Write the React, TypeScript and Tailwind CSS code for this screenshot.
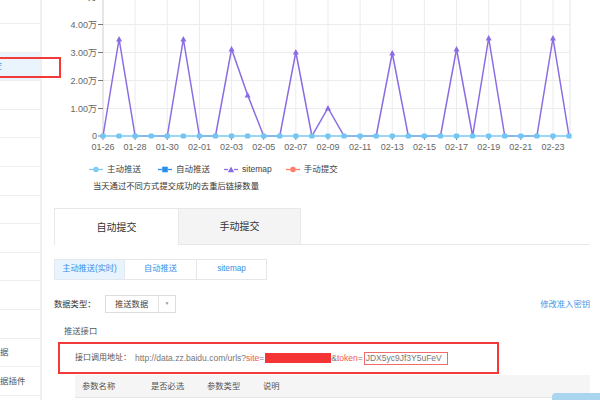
import React from "react";

const X0 = 103;
const DX = 16.07;
const Y0 = 136;

// sitemap 曲线：下标 -> y 坐标（其余为 0）
const SITEMAP_PEAKS: Record<number, number> = {
  1: 39,
  5: 39,
  8: 49,
  9: 95,
  12: 52,
  14: 108,
  18: 53,
  22: 49,
  24: 38,
  28: 38,
};

const DAYS = Array.from({ length: 30 }, (_, i) => i);

function dateLabel(i: number): string {
  const d = new Date(2018, 0, 26 + i);
  const m = String(d.getMonth() + 1).padStart(2, "0");
  const day = String(d.getDate()).padStart(2, "0");
  return `${m}-${day}`;
}

const Y_TICKS = [
  { y: -3, label: "5.00万" },
  { y: 24.5, label: "4.00万" },
  { y: 52.5, label: "3.00万" },
  { y: 80.5, label: "2.00万" },
  { y: 108.5, label: "1.00万" },
  { y: Y0, label: "0" },
];

function PushChart() {
  const xs = DAYS.map((i) => X0 + i * DX);
  const purplePts = DAYS.map((i) => `${xs[i]},${SITEMAP_PEAKS[i] ?? Y0}`).join(" ");
  const font = "'Liberation Sans','Noto Sans CJK SC',sans-serif";

  return (
    <svg width={558} height={152} viewBox="42 0 558 152" className="block shrink-0">
      {/* 网格 */}
      {Y_TICKS.slice(0, -1).map((t) => (
        <line key={t.y} x1={X0} x2={570} y1={t.y} y2={t.y} stroke="#ececec" />
      ))}
      {DAYS.filter((i) => i % 2 === 0).map((i) => (
        <line key={i} x1={xs[i]} x2={xs[i]} y1={0} y2={Y0} stroke="#ececec" />
      ))}
      <line x1={570} x2={570} y1={0} y2={Y0} stroke="#e4e4e4" />
      <line x1={X0} x2={X0} y1={0} y2={Y0} stroke="#d8d8d8" />

      {/* y 轴 */}
      {Y_TICKS.map((t) => (
        <g key={t.label}>
          <line x1={98} x2={X0} y1={t.y} y2={t.y} stroke="#777" />
          <text x={97} y={t.y + 3.2} textAnchor="end" fontSize={9} fill="#666" fontFamily={font}>
            {t.label}
          </text>
        </g>
      ))}

      {/* x 轴 */}
      {DAYS.filter((i) => i % 2 === 0).map((i) => (
        <g key={i}>
          <line x1={xs[i]} x2={xs[i]} y1={Y0} y2={Y0 + 4} stroke="#888" />
          <text x={xs[i]} y={149.5} textAnchor="middle" fontSize={9} fill="#666" fontFamily={font}>
            {dateLabel(i)}
          </text>
        </g>
      ))}

      {/* sitemap */}
      <polyline points={purplePts} fill="none" stroke="#8a6de2" strokeWidth={1.5} />
      {DAYS.filter((i) => SITEMAP_PEAKS[i] != null).map((i) => {
        const y = SITEMAP_PEAKS[i];
        return (
          <polygon
            key={i}
            points={`${xs[i]},${y - 3} ${xs[i] - 3},${y + 2.5} ${xs[i] + 3},${y + 2.5}`}
            fill="#8a6de2"
          />
        );
      })}

      {/* 主动推送 / 自动推送 */}
      <line x1={X0} x2={570} y1={Y0} y2={Y0} stroke="#78c8f2" strokeWidth={1.6} />
      {xs.map((x, i) => (
        <rect key={i} x={x - 2.6} y={Y0 - 2.6} width={5.2} height={5.2} rx={1.3} fill="#74c6f2" />
      ))}
    </svg>
  );
}

function LegendIcon({ color, shape }: { color: string; shape: "circle" | "square" | "triangle" }) {
  return (
    <svg width={14} height={7} viewBox="0 0 14 7" className="shrink-0">
      <line x1={0} x2={4} y1={3.5} y2={3.5} stroke={color} strokeWidth={1.3} />
      <line x1={10} x2={14} y1={3.5} y2={3.5} stroke={color} strokeWidth={1.3} />
      {shape === "circle" && <circle cx={7} cy={3.5} r={2.8} fill={color} />}
      {shape === "square" && <rect x={4.2} y={0.7} width={5.6} height={5.6} fill={color} />}
      {shape === "triangle" && <polygon points="7,0.5 3.8,6.3 10.2,6.3" fill={color} />}
    </svg>
  );
}

const LEGEND = [
  { label: "主动推送", color: "#7ecdf4", shape: "circle" as const, gap: "ml-0" },
  { label: "自动推送", color: "#2a8ff0", shape: "square" as const, gap: "ml-[17px]" },
  { label: "sitemap", color: "#8a6de2", shape: "triangle" as const, gap: "ml-[14px]" },
  { label: "手动提交", color: "#ff7b6b", shape: "circle" as const, gap: "ml-[14px]" },
];

const SIDEBAR_ROWS = 13;

function Sidebar() {
  return (
    <div className="w-[42px] shrink-0 border-r-2 border-[#f0f0f0] bg-white overflow-hidden flex flex-col">
      <div className="h-[24px] shrink-0 border-b border-[#eeeeee]" />
      {Array.from({ length: SIDEBAR_ROWS }, (_, i) => (
        <div
          key={i}
          className={`h-[28.6px] shrink-0 border-b border-[#eeeeee] flex items-center whitespace-nowrap text-[8.5px] ${
            i === 1 ? "bg-[#eaf4fd] text-[#3a8ee6]" : "text-[#555]"
          }`}
        >
          {i === 1 && <span className="ml-[-32px]">链接提交</span>}
          {i === 11 && <span className="ml-[-34px]">结构化数据</span>}
          {i === 12 && <span className="ml-[-34px]">结构化数据插件</span>}
        </div>
      ))}
    </div>
  );
}

export default function App() {
  return (
    <div className="relative w-[600px] h-[400px] overflow-hidden bg-white flex font-['Liberation_Sans','Noto_Sans_CJK_SC',sans-serif]">
      <Sidebar />

      <div className="flex-1 min-w-0 flex flex-col">
        <PushChart />

        {/* 图例 */}
        <div className="mt-[10px] h-[14px] pl-[47px] flex items-center text-[8.5px] text-[#444]">
          {LEGEND.map((l) => (
            <div key={l.label} className={`flex items-center gap-[4px] ${l.gap}`}>
              <LegendIcon color={l.color} shape={l.shape} />
              <span>{l.label}</span>
            </div>
          ))}
        </div>
        <div className="mt-[3px] h-[14px] pl-[51px] flex items-center text-[8.3px] text-[#333]">
          当天通过不同方式提交成功的去重后链接数量
        </div>

        {/* 提交方式 tabs */}
        <div className="mt-[15px] ml-[12px] mr-[10px] flex h-[37px] border-b border-[#e8e8e8]">
          <div className="w-[124px] -mb-px bg-white border-t border-l border-[#e8e8e8] flex items-center justify-center text-[10px] text-[#333]">
            自动提交
          </div>
          <div className="w-[123px] -mb-px bg-[#f4f4f4] border border-[#e8e8e8] flex items-center justify-center text-[10px] text-[#333]">
            手动提交
          </div>
        </div>

        {/* 子 tabs */}
        <div className="mt-[14px] ml-[12px] flex h-[21px] text-[8.2px] text-[#3a8ee6]">
          <div className="w-[71px] bg-[#e8f4fd] border border-[#e2e8ee] flex items-center justify-center">
            主动推送(实时)
          </div>
          <div className="w-[72px] border-y border-r border-[#e6e6e6] flex items-center justify-center">
            自动推送
          </div>
          <div className="w-[70px] border-y border-r border-[#e6e6e6] flex items-center justify-center">
            sitemap
          </div>
        </div>

        {/* 数据类型 */}
        <div className="mt-[15px] ml-[12px] mr-[10px] h-[18px] flex items-center text-[8.3px]">
          <span className="w-[51px] text-[#333]">数据类型：</span>
          <div className="h-full w-[71px] border border-[#dddddd] flex">
            <div className="flex-1 flex items-center pl-[9px] text-[#444]">推送数据</div>
            <div className="w-[17px] border-l border-[#e4e4e4] flex items-center justify-center text-[5px] text-[#999]">
              ▼
            </div>
          </div>
          <span className="ml-auto text-[#4d97e6]">修改准入密钥</span>
        </div>

        <div className="mt-[11px] ml-[22px] h-[14px] flex items-center text-[8.3px] text-[#555]">
          推送接口
        </div>

        {/* 接口地址 */}
        <div className="mt-[4px] ml-[16px] w-[441px] h-[32px] shrink-0 border-2 border-[#f23a3a] flex items-center pl-[15px] whitespace-nowrap text-[8.5px]">
          <span className="text-[#555] w-[60px] text-[8px]">接口调用地址：</span>
          <span className="text-[#777]">http://data.zz.baidu.com/urls?</span>
          <span className="text-[#f25555]">site</span>
          <span className="text-[#777]">=</span>
          <span className="ml-[1px] inline-block w-[66px] h-[10px] bg-[#f53535]" />
          <span className="text-[#777]">&amp;</span>
          <span className="text-[#f25555]">token</span>
          <span className="text-[#777]">=</span>
          <span className="ml-px h-[13px] px-[1px] pr-[5px] border border-[#f06a6a] text-[#777] flex items-center">
            JDX5yc9Jf3Y5uFeV
          </span>
        </div>

        {/* 参数表头 */}
        <div className="mt-px ml-[33px] mr-[10px] h-[23px] shrink-0 bg-[#f5f5f5] border-b border-[#e6e6e6] flex items-center text-[8.3px] text-[#555]">
          <span className="ml-[7px] w-[69px]">参数名称</span>
          <span className="w-[56px]">是否必选</span>
          <span className="w-[56px]">参数类型</span>
          <span>说明</span>
        </div>
      </div>

      {/* 标注红框 */}
      <div className="absolute left-[-4px] top-[57px] w-[65px] h-[21px] border-2 border-[#f23a3a]" />
      {/* 右下角悬浮按钮 */}
      <div className="absolute left-[552px] top-[393px] w-[60px] h-[20px] rounded-tl-[4px] bg-[#a9d5ee]" />
    </div>
  );
}
